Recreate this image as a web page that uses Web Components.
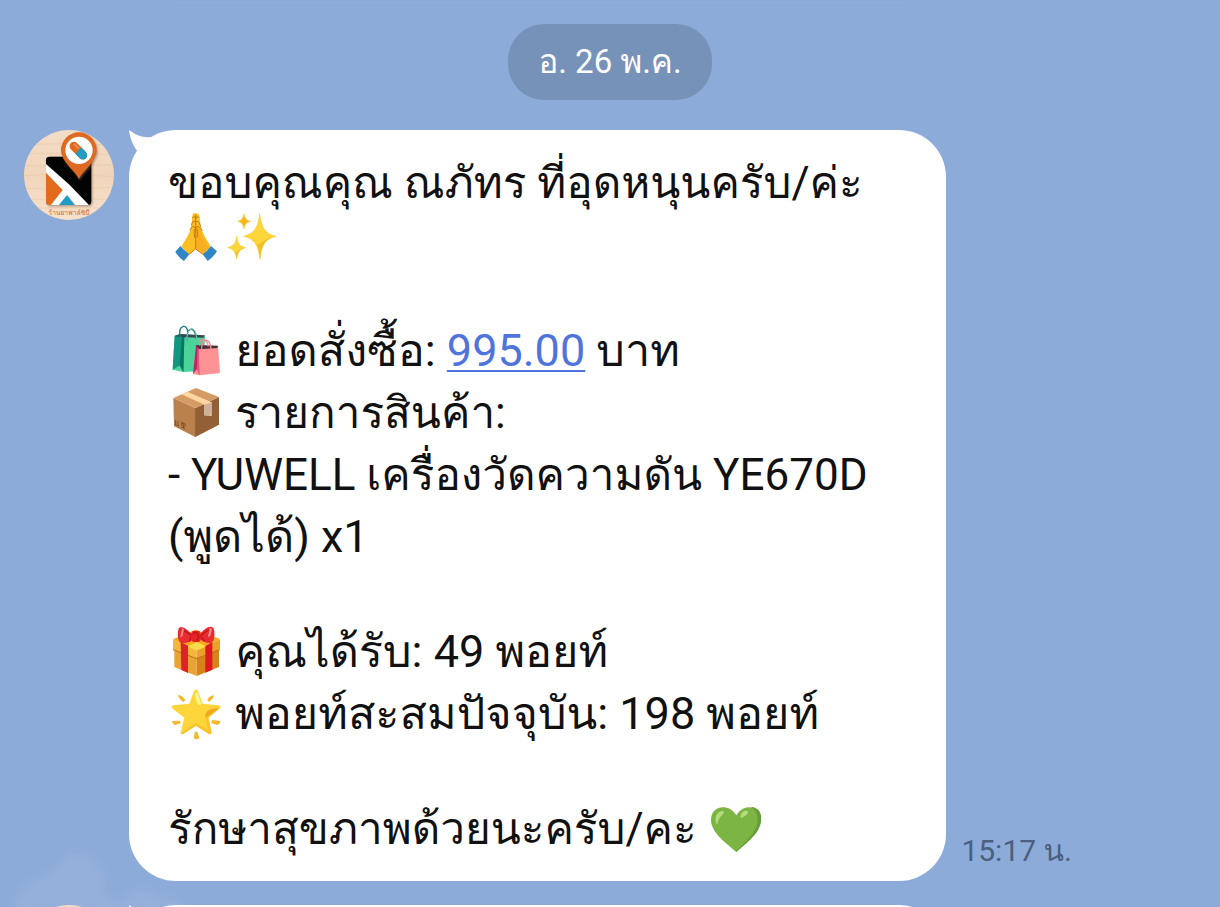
<!DOCTYPE html>
<html lang="th">
<head>
<meta charset="utf-8">
<meta name="viewport" content="width=device-width, initial-scale=1">
<title>Chat</title>
<style>
  html, body { margin: 0; height: 100%; }
  body { background: #8dabd9; font-family: Roboto, Loma, Garuda, "Noto Sans Thai Looped", "Noto Sans", sans-serif; color: #111; }
</style>
</head>
<body>
<chat-room>
  <chat-date>อ. 26 พ.ค.</chat-date>
  <chat-message time="15:17 น." sender="ร้านยาฟาล์ซิบี">
    <chat-line snug>ขอบคุณคุณ ณภัทร ที่อุดหนุนครับ/ค่ะ</chat-line>
    <chat-line compact><chat-emoji name="pray"></chat-emoji><chat-emoji name="sparkles"></chat-emoji></chat-line>
    <chat-line compact></chat-line>
    <chat-line><chat-emoji name="bags"></chat-emoji> ยอดสั่งซื้อ: <chat-link href="#amount">995.00</chat-link> บาท</chat-line>
    <chat-line snug><chat-emoji name="parcel"></chat-emoji> รายการสินค้า:</chat-line>
    <chat-line snug>- YUWELL เครื่องวัดความดัน YE670D</chat-line>
    <chat-line>(พูดได้) x1</chat-line>
    <chat-line compact></chat-line>
    <chat-line><chat-emoji name="gift"></chat-emoji> คุณได้รับ: 49 พอยท์</chat-line>
    <chat-line><chat-emoji name="star"></chat-emoji> พอยท์สะสมปัจจุบัน: 198 พอยท์</chat-line>
    <chat-line compact></chat-line>
    <chat-line snug>รักษาสุขภาพด้วยนะครับ/คะ <chat-emoji name="heart"></chat-emoji></chat-line>
  </chat-message>
  <chat-message><chat-line></chat-line></chat-message>
</chat-room>

<script>
const define = (name, html, setup) => customElements.define(name, class extends HTMLElement {
  constructor() {
    super();
    const t = document.createElement('template');
    t.innerHTML = html.trim();
    this.attachShadow({ mode: 'open' }).append(t.content.cloneNode(true));
  }
  connectedCallback() { if (setup) setup(this, this.shadowRoot); }
});

define('chat-room', `
<style>
  :host { display: flex; flex-direction: column; position: relative; height: 100vh; overflow: hidden; box-sizing: border-box; padding-top: 24px; }
  .edge { position: absolute; top: 0; left: 174px; width: 60vw; height: 1px; background: #8ea7d3; }
  .cloud { position: absolute; left: 0; bottom: 0; width: 220px; height: 70px; }
  .list { position: relative; display: flex; flex-direction: column; gap: 24px; }
  ::slotted(chat-date) { margin-bottom: 6px; }
</style>
<div class="edge"></div>
<svg class="cloud" viewBox="0 0 220 70" aria-hidden="true">
  <defs><filter id="soft"><feGaussianBlur stdDeviation="4"/></filter></defs>
  <path filter="url(#soft)" fill="#9db5dc" opacity=".5" d="M12 76Q18 46 42 40Q56 32 64 20Q86 10 98 28Q109 38 104 54Q110 62 122 66Q130 50 148 54Q160 62 176 62L186 76Z"/>
</svg>
<div class="list"><slot></slot></div>`);

define('chat-date', `
<style>
  :host { display: block; align-self: center; box-sizing: border-box; height: 76px; padding: 0 30px; border-radius: 36px; background: #7792b9; color: #fff; font-size: 33px; line-height: 76px; white-space: nowrap; }
</style><slot></slot>`);

define('chat-avatar', `
<style>
  :host { display: block; flex: none; width: 90px; height: 90px; border-radius: 50%; overflow: hidden; }
  svg { display: block; width: 100%; height: 100%; }
</style>
<svg viewBox="42 30 270 270" role="img">
  <defs>
    <linearGradient id="wood" x2="0" y2="1"><stop stop-color="#f3dcc6"/><stop offset=".5" stop-color="#f1d5ba"/><stop offset="1" stop-color="#f7e1cc"/></linearGradient>
    <filter id="sh" x="-20%" y="-20%" width="150%" height="150%"><feDropShadow dx="3" dy="4" stdDeviation="3" flood-color="#80644c" flood-opacity=".6"/></filter>
    <clipPath id="tile"><rect x="108" y="110" width="136" height="145" rx="11"/></clipPath>
  </defs>
  <rect x="42" y="30" width="270" height="270" fill="url(#wood)"/>
  <path d="M42 74Q140 68 312 76M42 102Q150 96 312 105M42 136Q150 142 312 134M42 167Q170 160 312 170M42 205Q150 211 312 202M42 238H312M60 264H300" fill="none" stroke="#e3c09d" stroke-width="3" opacity=".4"/>
  <rect x="108" y="110" width="136" height="145" rx="11" filter="url(#sh)"/>
  <g clip-path="url(#tile)">
    <rect x="108" y="110" width="136" height="145" fill="#030303"/>
    <path d="M108 132L176 192L238 256H108Z" fill="#fff"/>
    <path d="M108 158L158 210L122 256H108Z" fill="#e26b1d"/>
    <path d="M171 225L196 256H146Z" fill="#209bc3"/>
  </g>
  <path d="M207 178C199 154 153 126 153 90A53 53 0 0 1 260 91C260 126 216 154 207 178Z" fill="#de6a20" filter="url(#sh)"/>
  <circle cx="207" cy="91" r="41" fill="#fff"/>
  <g transform="rotate(45 205 92)">
    <rect x="173" y="79" width="64" height="26" rx="13" fill="#e06a20"/>
    <path d="M205 79H224A13 13 0 0 1 224 105H205Z" fill="#239bc2"/>
    <path d="M181 87H202" stroke="#ef9b68" stroke-width="4"/>
  </g>
</svg>`, (el, root) => {
  const name = el.getAttribute('name');
  if (!name) return;
  const text = document.createElementNS('http://www.w3.org/2000/svg', 'text');
  const attrs = { x: 177, y: 284, 'text-anchor': 'middle', 'font-size': 20, fill: '#d06a28' };
  for (const key in attrs) text.setAttribute(key, attrs[key]);
  text.textContent = name;
  root.querySelector('svg').append(text);
});

define('chat-message', `
<style>
  :host { display: flex; align-items: flex-start; padding-left: 24px; }
  .bubble { position: relative; flex: none; width: 67vw; box-sizing: border-box; margin-left: 15px; padding: 22px 20px 21px 39px; border-radius: 47px; background: #fff; }
  .tail { position: absolute; top: 0; left: 0; width: 30px; height: 34px; overflow: visible; }
  time { align-self: flex-end; margin: 0 0 12px 15px; color: #4b5f7e; font-size: 30px; line-height: 36px; white-space: nowrap; }
</style>
<div class="face"></div>
<div class="bubble">
  <svg class="tail" viewBox="0 0 30 34" aria-hidden="true"><path d="M0 0C7 5 13 8 22 7L30 12L10 34L9 22C4 16 1 8 0 0Z" fill="#fff"/></svg>
  <slot></slot>
</div>
<time></time>`, (el, root) => {
  const avatar = document.createElement('chat-avatar');
  avatar.setAttribute('name', el.getAttribute('sender') || '');
  root.querySelector('.face').append(avatar);
  root.querySelector('time').textContent = el.getAttribute('time') || '';
});

define('chat-line', `
<style>
  :host { display: block; height: 62px; font-size: 45px; line-height: 62px; white-space: nowrap; }
  :host([snug]) { font-size: 44px; }
  :host([compact]) { height: 53px; line-height: 53px; }
</style><slot></slot>`);

define('chat-link', `
<style>
  :host { display: inline; }
  a { color: #4f74dc; text-decoration: underline; text-decoration-thickness: 2px; text-underline-offset: 4px; text-decoration-skip-ink: none; }
</style><a><slot></slot></a>`, (el, root) => {
  root.querySelector('a').href = el.getAttribute('href');
});

const emoji = {
  pray: ['🙏', '24 21 168 168', `
    <path d="M104 25Q97 23 97 33L94 64Q91 80 80 98L64 124L86 149L107 133L130 149L152 124L135 96Q125 78 122 62L118 33Q117 23 104 25Z" fill="#fbbf25"/>
    <path d="M107 70Q112 98 107 132L129 147L149 126Q135 116 132 103Q126 82 117 68Z" fill="#f7ae20"/>
    <path d="M107 28V131M97 38Q104 32 107 39Q112 32 118 38M94 62Q98 44 106 50Q117 44 122 65M90 76Q96 56 106 70Q116 56 127 78M103 72Q101 88 104 98M111 72Q114 88 111 98" fill="none" stroke="#a75a14" stroke-width="2"/>
    <path d="M88 148L107 131L127 148" fill="none" stroke="#d87b13" stroke-width="3"/>
    <path d="M61 123Q73 137 88 148L72 168Q55 157 46 140Z" fill="#3187c6"/><path d="M153 123Q142 138 128 148L143 168Q160 156 171 139Z" fill="#3187c6"/>`],
  sparkles: ['✨', '192 21 168 168', `
    <g fill="#fdd63b" stroke="#f9cf35" stroke-width="2" stroke-linejoin="round"><path d="M299 25C304 70 316 86 348 94C316 102 305 117 300 163C294 118 283 102 251 94C283 85 294 70 299 25Z"/>
    <path d="M230 94C233 117 240 124 257 128C240 132 234 140 230 161C226 140 220 132 203 128C220 124 227 116 230 94Z"/>
    <path d="M252 27C255 41 260 46 272 49C260 52 255 57 252 72C249 57 244 52 233 49C244 46 249 41 252 27Z" fill="#f4b71d"/></g>
    <path d="M348 94C316 102 305 117 300 163C298 143 296 130 291 119C309 112 318 99 348 94Z" fill="#f3bf27"/><path d="M257 128C240 132 234 140 230 161L225 142C236 138 238 130 257 128Z" fill="#f3bf27"/>`],
  bags: ['🛍️', '24 21 168 168', `
    <path d="M61 57L135 63L131 168L70 171L38 164L44 62Z" fill="#4bd39a"/>
    <path d="M61 57L44 62L38 164L59 151L70 171L73 66Z" fill="#119780"/><path d="M59 151L66 66L73 66L70 171Z" fill="#087662"/>
    <path d="M61 57L135 61L130 68L74 67L44 64Z" fill="#354852"/>
    <path d="M61 66C52 30 82 24 83 51M81 78C76 38 105 27 109 72" fill="none" stroke="#237e7c" stroke-width="4"/><path d="M81 78C77 34 112 26 110 76" fill="none" stroke="#76c9b8" stroke-width="3"/>
    <path d="M108 90L174 93L180 174L118 181L99 177Z" fill="#ff9295"/>
    <path d="M108 90L99 177L111 162L118 181L116 98Z" fill="#bc2868"/><path d="M111 162L113 99L117 99L118 181Z" fill="#e85480"/>
    <path d="M107 90L174 92L172 99L118 103Z" fill="#43313c"/>
    <path d="M119 92C113 67 142 69 145 94M125 106C122 70 150 62 153 102" fill="none" stroke="#f38b95" stroke-width="4"/>`],
  parcel: ['📦', '24 207 168 168', `
    <path d="M40 249L106 279V366L42 334Z" fill="#ba814c"/><path d="M106 279L177 246V329L106 366Z" fill="#935f36"/>
    <path d="M40 249L108 219L177 246L106 279Z" fill="#d49b64"/><path d="M64 238L82 230L155 262V303L133 300V269Z" fill="#ffd6a2"/>
    <path d="M133 270L155 262V297L144 302L133 302Z" fill="#cfb19b"/><path d="M106 279V366" stroke="#805332" stroke-width="2"/>
    <path d="M47 315V328M54 318V332M44 328L57 334M63 321L77 328M70 324V339M65 324V332M75 328V336M64 336L75 341" stroke="#5b3a24" stroke-width="2" fill="none"/>`],
  gift: ['🎁', '24 24 168 168', `
    <path d="M43 100L110 125V183L43 156Z" fill="#eaa335"/><path d="M110 125L177 98V156L110 183Z" fill="#d98219"/>
    <path d="M39 73L110 105V130L39 103Z" fill="#f6b63d"/><path d="M110 105L180 72V103L110 130Z" fill="#eda029"/>
    <path d="M39 73L106 44L180 72L110 107Z" fill="#f7aa20"/><path d="M82 94L111 81L139 94L110 107Z" fill="#ffda4a"/>
    <path d="M39 104L110 131L180 104" fill="none" stroke="#bd741c" stroke-width="3"/>
    <path d="M62 82L84 92V174L64 165Z" fill="#df2227"/><path d="M136 93L157 82V164L136 173Z" fill="#df1723"/>
    <path d="M95 57C77 38 58 28 55 44C51 60 55 81 64 84Q87 86 102 72L118 72Q139 87 155 83C164 77 166 48 160 39C151 29 131 43 121 57Z" fill="#e82c30"/>
    <path d="M62 45Q72 44 94 61L88 80M155 46Q142 43 121 63L134 78" fill="none" stroke="#bd151e" stroke-width="4"/>
    <path d="M66 40L72 43L67 65L61 66ZM149 39L156 42L151 63L144 67Z" fill="#ff8c91"/>
    <rect x="94" y="47" width="28" height="34" rx="10" fill="#e82328"/><path d="M99 58Q106 46 113 57Q120 73 108 76" fill="none" stroke="#a6111b" stroke-width="3"/>`],
  star: ['🌟', '24 210 168 168', `
    <g fill="#f8b82b"><path d="M57 240Q66 242 76 255L70 262Q57 252 54 243ZM159 241Q150 242 142 254L147 261Q158 252 162 244ZM36 318L60 317L62 325L44 330Q36 326 36 318ZM181 318L156 315L154 324L172 330Q182 325 181 318ZM105 350H112L118 370Q109 376 101 370Z"/></g>
    <path d="M108 223Q112 223 115 231L128 266L175 271Q187 273 178 281L145 308L155 351Q156 361 146 356L108 332L70 356Q60 361 62 350L73 308L38 281Q29 273 41 271L88 266L101 231Q104 223 108 223Z" fill="#fed63b"/>
    <path d="M182 276L145 308L154 351Q155 361 146 356L108 332L70 356Q65 359 62 355L107 324L145 345L134 303L174 279Z" fill="#f8c32c"/>
    <path d="M137 296Q144 280 178 279L157 294L140 305Q134 307 137 296Z" fill="#efa819"/>
    <path d="M105 237Q111 225 116 242L124 265Q123 273 116 269Q106 260 105 237Z" fill="#fff48e"/>`],
  heart: ['💚', '42 27 168 168', `
    <path d="M127 183C101 160 51 126 51 87C51 43 105 35 127 73C148 36 201 42 201 87C201 126 151 160 127 183Z" fill="#7db544"/>
    <path d="M171 48C207 51 207 87 193 115C178 143 144 167 127 183L125 181C151 158 190 123 191 87Q192 62 171 48Z" fill="#649c37"/>
    <path d="M67 98C58 73 77 55 89 61C94 68 76 74 71 95Q70 101 67 98ZM140 77C139 63 156 55 162 62C164 69 151 75 145 80Q140 81 140 77Z" fill="#b2dc7d"/>`]
};

define('chat-emoji', `
<style>
  :host { display: inline; }
  svg { width: 56px; height: 56px; margin: -12px 0; }
</style><svg role="img"></svg>`, (el, root) => {
  const [label, box, art] = emoji[el.getAttribute('name')];
  const svg = root.querySelector('svg');
  svg.setAttribute('aria-label', label);
  svg.setAttribute('viewBox', box);
  svg.innerHTML = art;
});
</script>
</body>
</html>
